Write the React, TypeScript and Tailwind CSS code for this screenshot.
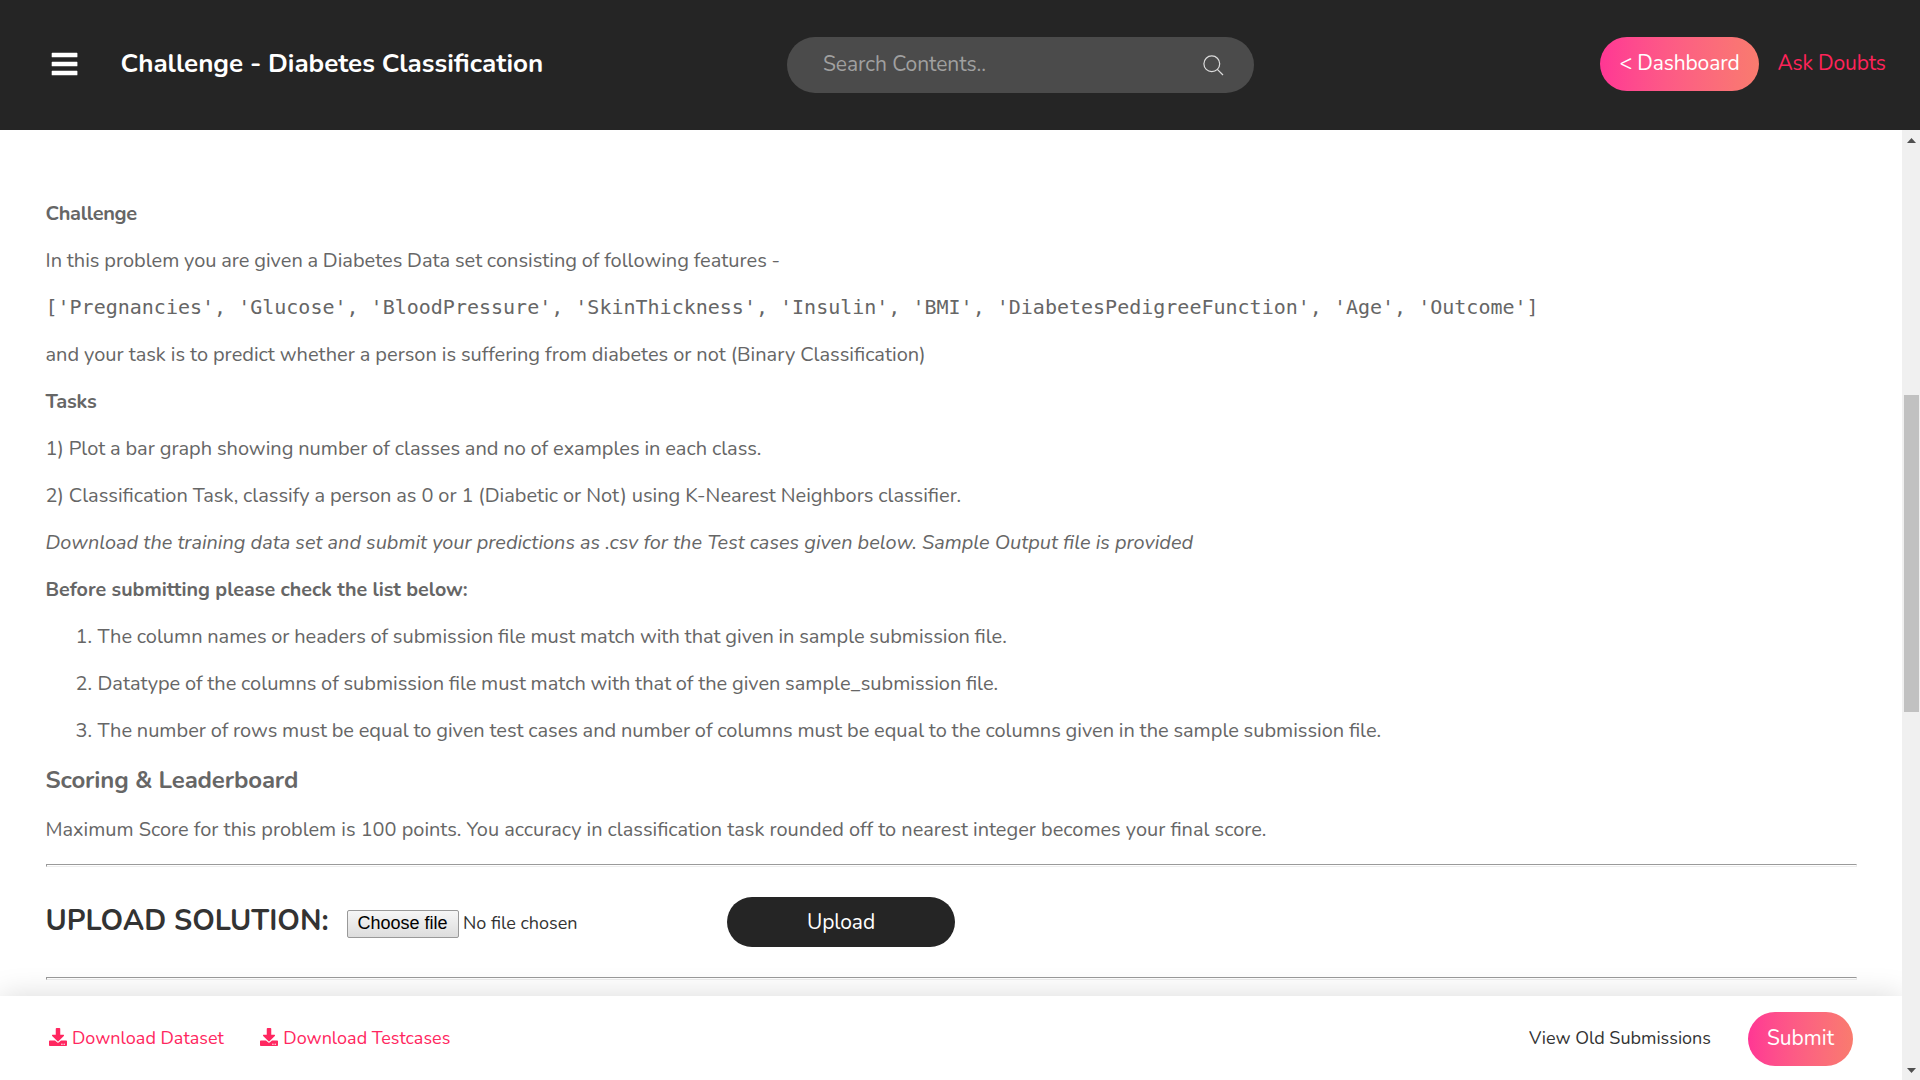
import React from "react";
import { FaDownload } from "react-icons/fa";

const checklist = [
  { text: "The column names or headers of submission file must match with that given in sample submission file.", spacing: "[word-spacing:-0.48px]" },
  { text: "Datatype of the columns of submission file must match with that of the given sample_submission file.", spacing: "[word-spacing:-0.5px]" },
  { text: "The number of rows must be equal to given test cases and number of columns must be equal to the columns given in the sample submission file.", spacing: "[word-spacing:-0.43px]" },
];

function Rule() {
  return (
    <div className="h-[3px] border border-t-[#9a9a9a] border-l-[#9a9a9a] border-r-[#ededed] border-b-[#ededed]" />
  );
}

function Header() {
  return (
    <header className="flex h-[130px] shrink-0 items-start bg-[#252525] pt-[37px] text-[21px] leading-[28px]">
      <div className="flex w-[787px] pl-[51px]">
        <button className="mt-[15px] h-6 w-[27px]" aria-label="Menu">
          <svg className="h-6 w-[27px]" viewBox="0 0 27 24" fill="#fff">
            <rect x="0.7" y="0.8" width="25.7" height="4.5" rx="0.6" />
            <rect x="0.7" y="9.8" width="25.7" height="4.5" rx="0.6" />
            <rect x="0.7" y="18.8" width="25.7" height="4.5" rx="0.6" />
          </svg>
        </button>
        <h1 className="mt-[9px] ml-[42.5px] text-[26px] leading-[36px] font-bold [word-spacing:-0.3px] text-white">
          Challenge - Diabetes Classification
        </h1>
      </div>
      <div className="flex h-14 w-[467px] items-center justify-between rounded-full bg-[#4b4b4b] pr-[30px] pl-9">
        <span className="-mt-0.5 tracking-[-0.06px] text-[#a0a0a0]">Search Contents..</span>
        <svg className="mt-px size-[21px]" viewBox="0 0 21 21" fill="none" stroke="#dcdcdc" strokeWidth="1.2">
          <circle cx="8.8" cy="8.8" r="7.9" />
          <path d="M14.3 14.3 20 20" />
        </svg>
      </div>
      <div className="ml-[346px] flex items-start">
        <button className="h-[54px] w-[159px] rounded-full bg-linear-to-r from-[#ff3694] to-[#f97b6e] pb-0.5 tracking-[-0.12px] text-white">
          &lt; Dashboard
        </button>
        <a className="mt-3 ml-[18.5px] tracking-[-0.15px] text-[#ff2359]">Ask Doubts</a>
      </div>
    </header>
  );
}

function Scrollbar() {
  return (
    <div className="relative flex w-[18px] shrink-0 flex-col items-center bg-[#f0f0f0] pt-2 pb-[7px]">
      <svg className="h-[5px] w-[9px]" viewBox="0 0 9 5">
        <path d="M4.5 0 9 5H0z" fill="#505050" />
      </svg>
      <div className="mt-[252px] ml-px h-[317px] w-[15px] bg-[#c1c1c1]" />
      <svg className="mt-auto h-[5px] w-[9px]" viewBox="0 0 9 5">
        <path d="M0 0h9L4.5 5z" fill="#505050" />
      </svg>
    </div>
  );
}

function Upload() {
  return (
    <section className="flex h-[110px] text-[#333]">
      <h2 className="mt-[34px] w-[301px] text-[28.8px] leading-[40px] font-bold whitespace-nowrap">UPLOAD SOLUTION:</h2>
      <div className="mt-[43px] flex h-7 w-[380px] items-center">
        <button className="h-7 w-28 rounded-[2px] border border-[#999] bg-linear-to-b from-[#f6f6f6] to-[#dddddd] pb-0.5 font-['Liberation_Sans',sans-serif] text-[18px] leading-[22px] text-black">
          Choose file
        </button>
        <span className="-mt-0.5 ml-[4.5px] text-[18px] leading-[24px]">No file chosen</span>
      </div>
      <button className="mt-[30px] h-[50px] w-[228px] rounded-full bg-[#252525] pt-0.5 pl-px text-[21px] tracking-[-0.1px] text-white">
        Upload
      </button>
    </section>
  );
}

function Footer() {
  return (
    <footer className="relative flex h-[84px] shrink-0 items-start bg-white pr-[49px] pl-[49px] text-[18px] leading-[24px] text-[#333] shadow-[0_0_30px_rgba(0,0,0,0.15)]">
      <a className="mt-[30px] flex items-center text-[#ff2760]">
        <FaDownload className="-mt-0.5 mr-[5px] size-[18px]" />
        Download Dataset
      </a>
      <a className="mt-[30px] ml-9 flex items-center text-[#ff2760]">
        <FaDownload className="-mt-0.5 mr-[5.5px] size-[18px]" />
        Download Testcases
      </a>
      <a className="mt-[30px] ml-auto">View Old Submissions</a>
      <button className="mt-4 ml-[37px] h-[54px] w-[105px] rounded-full bg-linear-to-r from-[#ff3694] to-[#f97b6e] pb-0.5 text-[21px] text-white">
        Submit
      </button>
    </footer>
  );
}

export default function App() {
  return (
    <div className="flex h-[1080px] w-[1920px] flex-col overflow-hidden bg-white font-['Nunito','Lato',sans-serif]">
      <Header />
      <div className="flex min-h-0 flex-1">
        <div className="flex flex-1 flex-col">
          <main className="min-h-0 flex-1 pt-[70px] pr-[45px] pl-[45.5px]">
            <article className="flex flex-col gap-5 text-[20px] leading-[27px] whitespace-nowrap text-[#666]">
              <p className="font-bold tracking-[-0.35px]">Challenge</p>
              <p className="[word-spacing:-0.42px]">In this problem you are given a Diabetes Data set consisting of following features -</p>
              <p className="font-['DejaVu_Sans_Mono',monospace]">
                ['Pregnancies', 'Glucose', 'BloodPressure', 'SkinThickness', 'Insulin', 'BMI', 'DiabetesPedigreeFunction', 'Age', 'Outcome']
              </p>
              <p className="[word-spacing:-0.22px]">and your task is to predict whether a person is suffering from diabetes or not (Binary Classification)</p>
              <p className="font-bold tracking-[-0.15px]">Tasks</p>
              <p className="[word-spacing:-0.33px]">1) Plot a bar graph showing number of classes and no of examples in each class.</p>
              <p className="[word-spacing:-0.27px]">2) Classification Task, classify a person as 0 or 1 (Diabetic or Not) using K-Nearest Neighbors classifier.</p>
              <p className="text-[19.9px] italic">
                Download the training data set and submit your predictions as .csv for the Test cases given below. Sample Output file is provided
              </p>
              <p className="text-[19.72px] font-bold">Before submitting please check the list below:</p>
              <ol className="flex flex-col gap-5">
                {checklist.map((item, i) => (
                  <li key={i} className="flex pl-[30px]">
                    <span className="w-[22px]">{i + 1}.</span>
                    <span className={item.spacing}>{item.text}</span>
                  </li>
                ))}
              </ol>
              <h3 className="text-[24px] leading-[32px] font-bold tracking-[-0.15px]">Scoring &amp; Leaderboard</h3>
              <p className="text-[19.94px]">
                Maximum Score for this problem is 100 points. You accuracy in classification task rounded off to nearest integer becomes your final score.
              </p>
            </article>
            <div className="mt-[21px]">
              <Rule />
              <Upload />
              <Rule />
            </div>
          </main>
          <Footer />
        </div>
        <Scrollbar />
      </div>
    </div>
  );
}
